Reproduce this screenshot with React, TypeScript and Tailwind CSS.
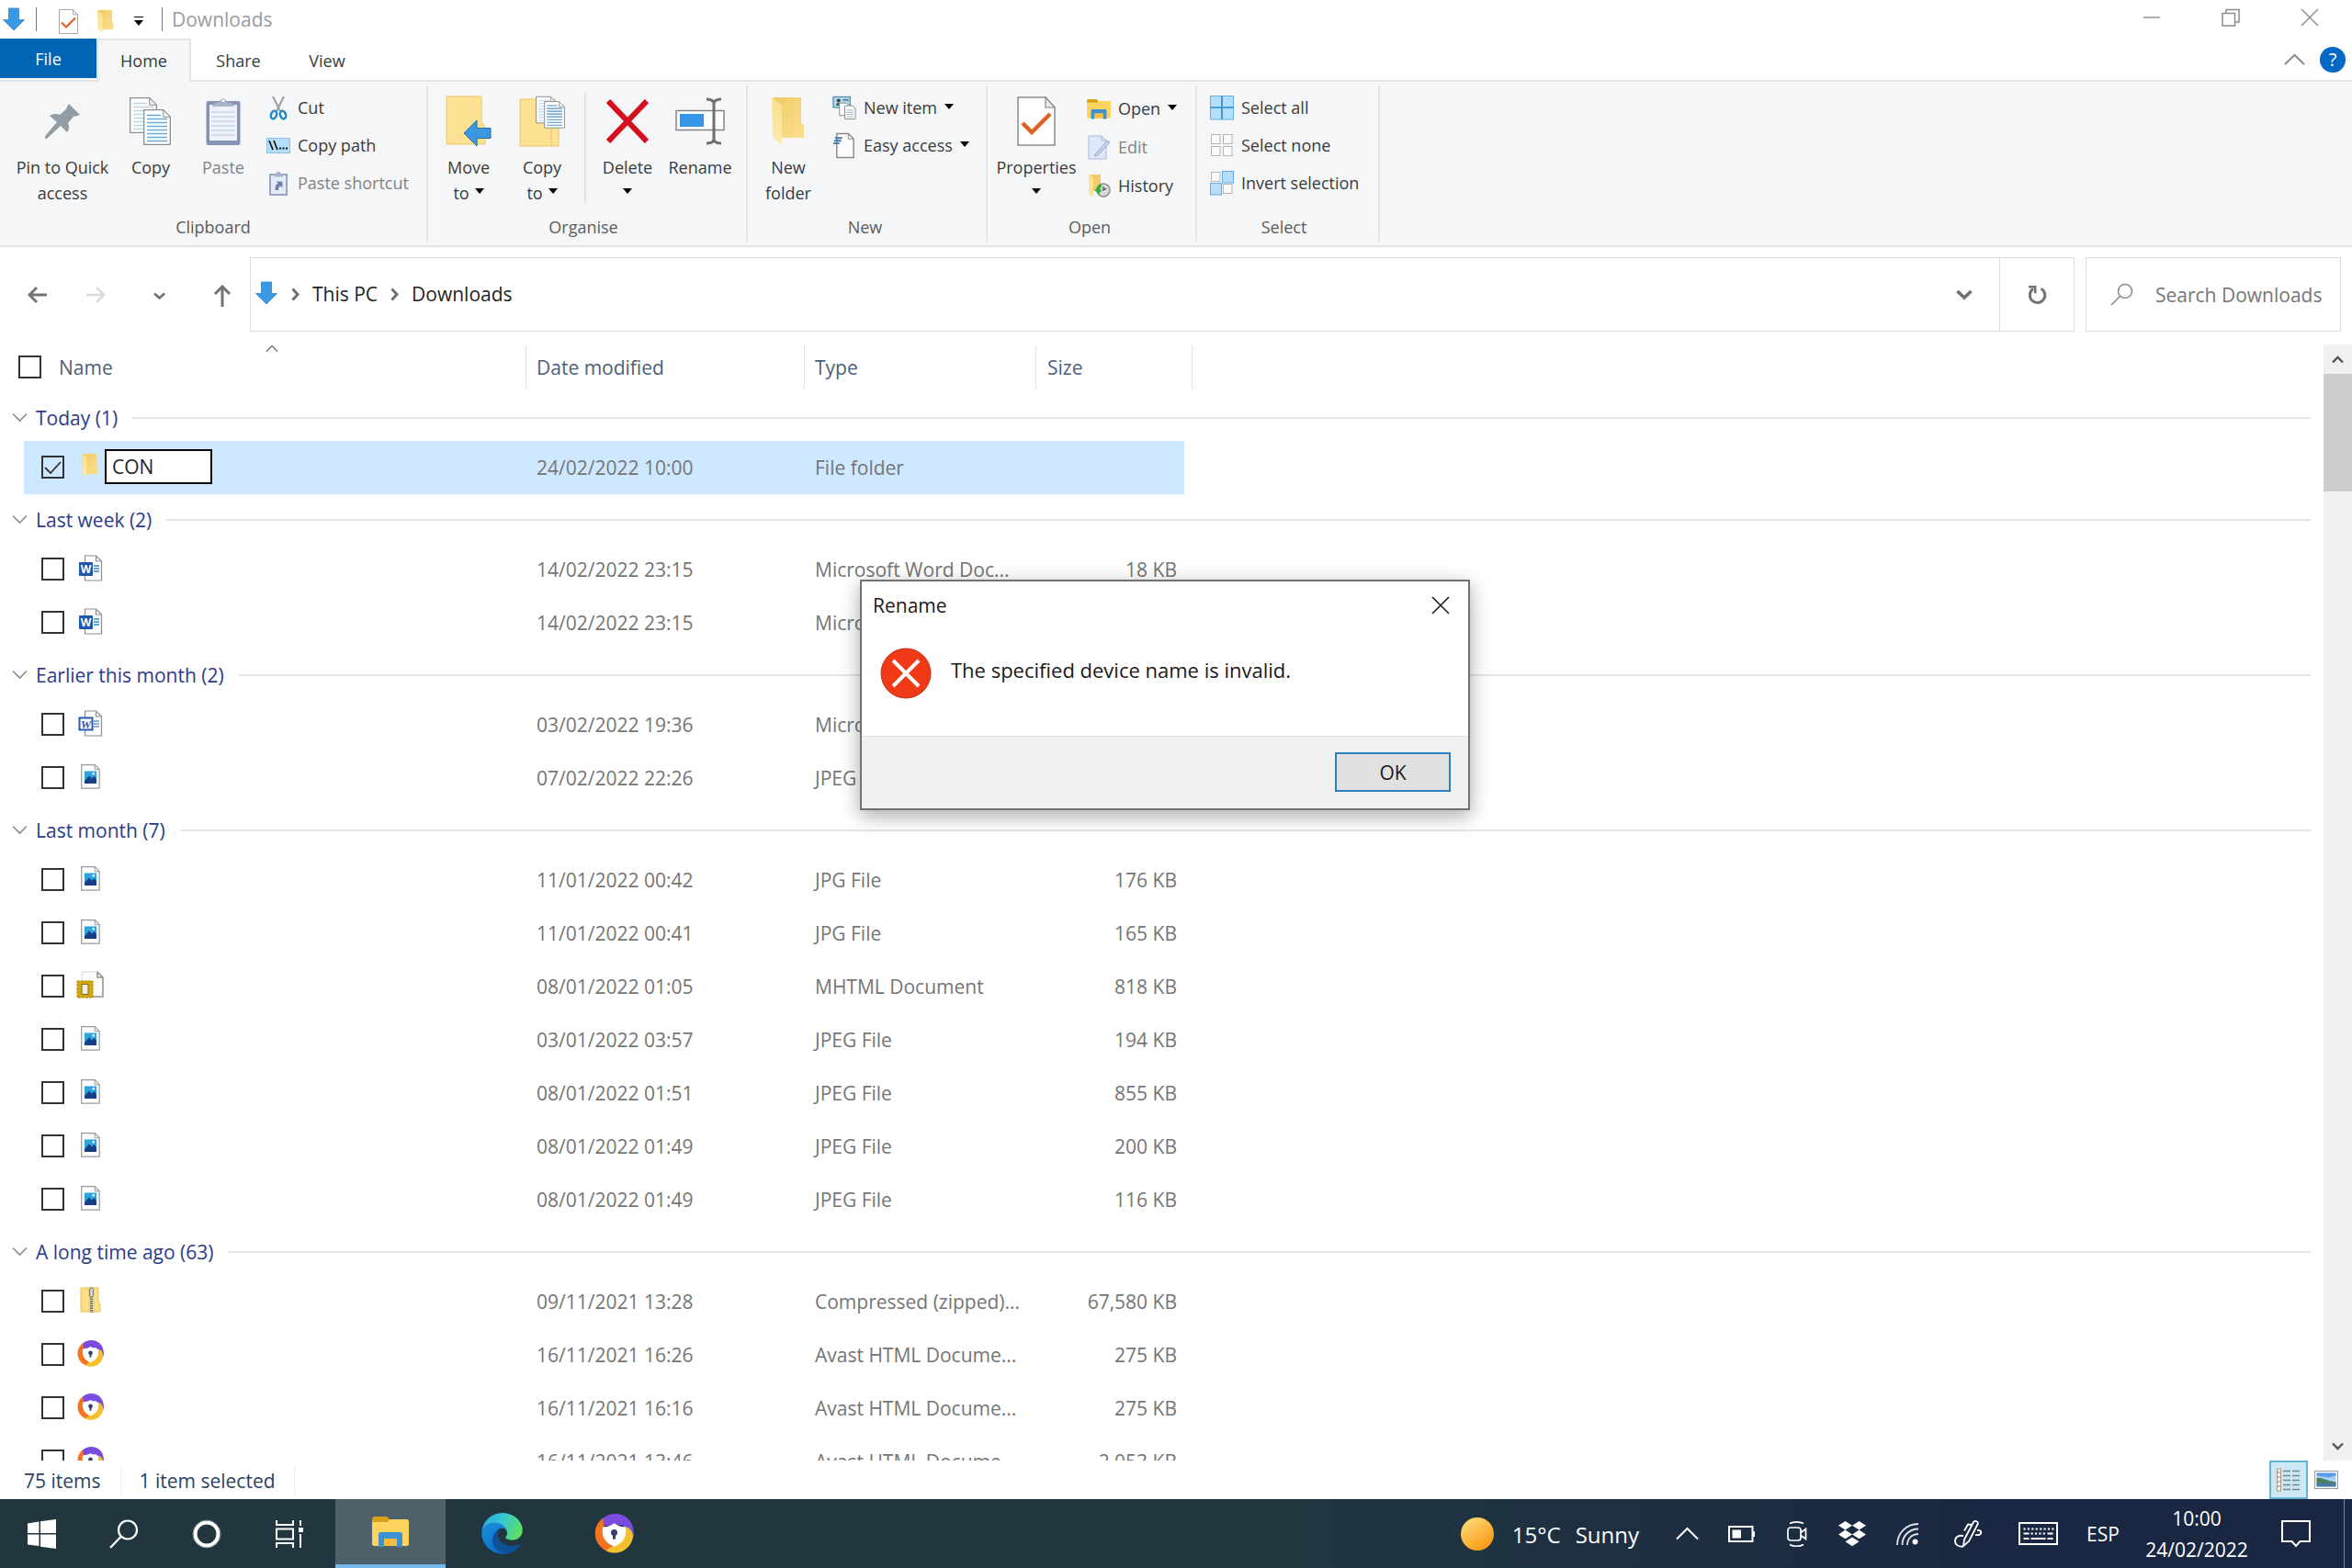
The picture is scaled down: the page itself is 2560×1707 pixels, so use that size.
import { Fragment, useState } from 'react'
import type { ReactNode } from 'react'

type FileKind = 'folder' | 'word' | 'wordOld' | 'image' | 'mhtml' | 'zip' | 'avast'

interface FileRow {
  kind: FileKind
  date: string
  type: string
  size: string
}

interface FileGroup {
  title: string
  rows: FileRow[]
}

const GROUPS: FileGroup[] = [
  {
    title: 'Today (1)',
    rows: [{ kind: 'folder', date: '24/02/2022 10:00', type: 'File folder', size: '' }],
  },
  {
    title: 'Last week (2)',
    rows: [
      { kind: 'word', date: '14/02/2022 23:15', type: 'Microsoft Word Doc...', size: '18 KB' },
      { kind: 'word', date: '14/02/2022 23:15', type: 'Microsoft Word Doc...', size: '18 KB' },
    ],
  },
  {
    title: 'Earlier this month (2)',
    rows: [
      { kind: 'wordOld', date: '03/02/2022 19:36', type: 'Microsoft Word 9...', size: '64 KB' },
      { kind: 'image', date: '07/02/2022 22:26', type: 'JPEG File', size: '152 KB' },
    ],
  },
  {
    title: 'Last month (7)',
    rows: [
      { kind: 'image', date: '11/01/2022 00:42', type: 'JPG File', size: '176 KB' },
      { kind: 'image', date: '11/01/2022 00:41', type: 'JPG File', size: '165 KB' },
      { kind: 'mhtml', date: '08/01/2022 01:05', type: 'MHTML Document', size: '818 KB' },
      { kind: 'image', date: '03/01/2022 03:57', type: 'JPEG File', size: '194 KB' },
      { kind: 'image', date: '08/01/2022 01:51', type: 'JPEG File', size: '855 KB' },
      { kind: 'image', date: '08/01/2022 01:49', type: 'JPEG File', size: '200 KB' },
      { kind: 'image', date: '08/01/2022 01:49', type: 'JPEG File', size: '116 KB' },
    ],
  },
  {
    title: 'A long time ago (63)',
    rows: [
      { kind: 'zip', date: '09/11/2021 13:28', type: 'Compressed (zipped)...', size: '67,580 KB' },
      { kind: 'avast', date: '16/11/2021 16:26', type: 'Avast HTML Docume...', size: '275 KB' },
      { kind: 'avast', date: '16/11/2021 16:16', type: 'Avast HTML Docume...', size: '275 KB' },
      { kind: 'avast', date: '16/11/2021 13:46', type: 'Avast HTML Docume...', size: '2,053 KB' },
    ],
  },
]

/* ---------- Icons ---------- */

function DownArrow() {
  return (
    <svg width="24" height="26" viewBox="0 0 24 26">
      <path d="M6.5 1h11v12.500h6L12 25 .5 13.500h6z" fill="#3a99e4" stroke="#2f86cd" strokeWidth=".8" />
    </svg>
  )
}

function Caret() {
  return (
    <svg width="10" height="6" viewBox="0 0 10 6" className="shrink-0">
      <path d="M0 0h10L5 6z" fill="#000" />
    </svg>
  )
}

function Chevron({ d, size, color, width }: { d: string; size: [number, number]; color: string; width: number }) {
  return (
    <svg width={size[0]} height={size[1]} viewBox={`0 0 ${size[0]} ${size[1]}`} className="shrink-0">
      <path d={d} fill="none" stroke={color} strokeWidth={width} />
    </svg>
  )
}

function FolderIcon({ width, height }: { width: number; height: number }) {
  return (
    <svg width={width} height={height} viewBox="0 0 36 52" preserveAspectRatio="none">
      <defs>
        <linearGradient id="folderBack" x1="0" y1="0" x2="1" y2="1">
          <stop offset="0" stopColor="#f0cc68" />
          <stop offset="1" stopColor="#fbdf8c" />
        </linearGradient>
        <linearGradient id="folderFront" x1="0" y1="0" x2="0" y2="1">
          <stop offset="0" stopColor="#fbe089" />
          <stop offset="1" stopColor="#fdeab0" />
        </linearGradient>
      </defs>
      <path d="M2 0h30v28l3 2v14H10z" fill="url(#folderBack)" />
      <path d="M0 0l11 9v43L1 43z" fill="url(#folderFront)" />
    </svg>
  )
}

function PropertiesIcon({ width, height }: { width: number; height: number }) {
  return (
    <svg width={width} height={height} viewBox="0 0 42 54">
      <path d="M1 1h30l10 11v41H1z" fill="#fdfdfd" stroke="#8b8b8b" strokeWidth="1.500" />
      <path d="M31 1v11h10z" fill="#ececec" stroke="#8b8b8b" strokeWidth="1.200" />
      <path d="M6 29l10 10 20-20" fill="none" stroke="#dd6424" strokeWidth="4.500" />
    </svg>
  )
}

function Sheet({ x, y, line }: { x: number; y: number; line: string }) {
  return (
    <g transform={`translate(${x} ${y})`}>
      <path d="M.7.7h21l7.600 7.600v30H.7z" fill="#fff" stroke="#8b8f94" strokeWidth="1.300" />
      <path d="M21.700.7v7.600h7.600z" fill="#eef0f2" stroke="#8b8f94" strokeWidth="1" />
      <path d="M4 6.500h15M4 10.500h22M4 14.500h22M4 18.500h22M4 22.500h22M4 26.500h22M4 30.500h22M4 34.500h22" stroke={line} strokeWidth="1.500" />
    </g>
  )
}

function CopyIcon() {
  return (
    <svg width="46" height="54" viewBox="0 0 46 54">
      <Sheet x={0} y={1} line="#b9d5e6" />
      <Sheet x={15} y={14} line="#67a9d4" />
    </svg>
  )
}

function PinIcon() {
  return (
    <svg width="40" height="40" viewBox="0 0 40 40">
      <path d="M27 1l12 12-3 1-4 1-6 7c2 4 1 7-1 10l-7-7L4 38c-1 1-3 2-3 0 0-1 0-2 1-3l12-14-8-7c3-2 7-3 11-1l7-6 1-3z" fill="#929ca5" />
    </svg>
  )
}

function PasteIcon() {
  return (
    <svg width="38" height="54" viewBox="0 0 38 54">
      <rect x=".5" y="5" width="37" height="48" rx="2" fill="#8693b3" />
      <rect x="4" y="9" width="30" height="39" fill="#eef2fb" />
      <path d="M6 17h26M6 22h26M6 27h26M6 32h26M6 37h26M6 42h26" stroke="#cdd5e8" strokeWidth="1.300" />
      <path d="M7 11c0-4 5-4 8-5 1-5 7-5 8 0 3 1 8 1 8 5z" fill="#aab3c9" />
      <circle cx="19" cy="4.500" r="1.600" fill="#f3f5f8" />
    </svg>
  )
}

function CutIcon() {
  return (
    <svg width="20" height="27" viewBox="0 0 20 27">
      <path d="M4 1l8 16M16 1L8 17" stroke="#9a9da1" strokeWidth="2" />
      <ellipse cx="5" cy="21" rx="3" ry="4.500" transform="rotate(20 5 21)" fill="none" stroke="#2389c6" strokeWidth="2.400" />
      <ellipse cx="15" cy="21" rx="3" ry="4.500" transform="rotate(-20 15 21)" fill="none" stroke="#2389c6" strokeWidth="2.400" />
    </svg>
  )
}

function CopyPathIcon() {
  return (
    <svg width="26" height="17" viewBox="0 0 26 17">
      <rect x=".5" y=".5" width="25" height="16" fill="#b5defb" stroke="#8fbfe4" />
      <path d="M3 3l4 10M8 3l4 10" stroke="#111" strokeWidth="1.700" />
      <path d="M14 11.500h2M17.500 11.500h2M21 11.500h2" stroke="#111" strokeWidth="2" />
    </svg>
  )
}

function PasteShortcutIcon() {
  return (
    <svg width="20" height="27" viewBox="0 0 20 27">
      <rect x="1" y="4" width="18" height="22" fill="#e6ecf7" stroke="#98a6c3" strokeWidth="2" />
      <path d="M5 5c0-2 2-2 3-2.500 0-2.500 4-2.500 4 0C13 3 15 3 15 5v1.500H5z" fill="#aab3c9" />
      <path d="M6.500 21c0-5 1-6.500 3-7.500l-2-2h7v7l-2-2c-2 1-2.500 2-2.500 4.500z" fill="#7484a8" />
    </svg>
  )
}

function MoveToIcon() {
  return (
    <svg width="50" height="56" viewBox="0 0 50 56">
      <path d="M1 1h38v28l4 5v19H1z" fill="#fde293" stroke="#ecc76a" strokeWidth="1" />
      <path d="M35 33v20" stroke="#ecc76a" />
      <path d="M20 41l14-14v8.500h15v11H34V55z" fill="#3a97e2" stroke="#2b6ea6" strokeWidth="1" />
    </svg>
  )
}

function CopyToIcon() {
  return (
    <svg width="50" height="56" viewBox="0 0 50 56">
      <path d="M1 4h38v28l4 3v20H1z" fill="#fde293" stroke="#ecc76a" strokeWidth="1" />
      <path d="M35 35v20" stroke="#ecc76a" />
      <g transform="translate(18 0) scale(.76)">
        <Sheet x={0} y={1} line="#b9d5e6" />
        <Sheet x={12} y={8} line="#4f92cc" />
      </g>
    </svg>
  )
}

function DeleteIcon() {
  return (
    <svg width="46" height="48" viewBox="0 0 46 48">
      <path d="M2 2l42 44M44 2L2 46" stroke="#d6101c" strokeWidth="6" />
    </svg>
  )
}

function RenameIcon() {
  return (
    <svg width="54" height="52" viewBox="0 0 54 52">
      <rect x="1" y="14.500" width="52" height="21" fill="#fdfdfd" stroke="#7d7d7d" strokeWidth="1.400" />
      <rect x="5" y="18" width="26" height="14" fill="#3595e6" />
      <path d="M42 6v40M34 2c5 0 8 1 8 5 0-4 3-5 8-5M34 50c5 0 8-1 8-5 0 4 3 5 8 5" fill="none" stroke="#6f6f6f" strokeWidth="3" />
    </svg>
  )
}

function NewItemIcon() {
  return (
    <svg width="27" height="27" viewBox="0 0 27 27">
      <rect x="1" y="1" width="19" height="12" fill="#a9daf4" stroke="#5d8aa6" strokeWidth="1.300" />
      <path d="M4 11c0-5 6-5 6 0z" fill="#3f6f4f" />
      <circle cx="7" cy="5" r="2" fill="#3d3a37" />
      <path d="M12 4.500h6" stroke="#456" strokeWidth="1.300" />
      <path d="M8 8h8l3 3v11H8z" fill="#fff" stroke="#888" />
      <path d="M14 11h9l3 3v12H14z" fill="#fff" stroke="#888" />
      <path d="M16 16h8M16 18.500h8M16 21h8M16 23.500h8" stroke="#9db1bf" />
    </svg>
  )
}

function EasyAccessIcon() {
  return (
    <svg width="27" height="29" viewBox="0 0 27 29">
      <path d="M5 1h13l6 6v21H5z" fill="#fbfbfb" stroke="#8a8a8a" strokeWidth="1.500" />
      <path d="M18 1v6h6" fill="none" stroke="#8a8a8a" />
      <path d="M3 6h8M2 9h8M1 12h7" stroke="#3c77b4" strokeWidth="2" />
    </svg>
  )
}

function ExplorerIcon({ width, height }: { width: number; height: number }) {
  return (
    <svg width={width} height={height} viewBox="0 0 40 34">
      <path d="M0 3c0-2 1-3 3-3h13l3 3v5H0z" fill="#dba114" />
      <path d="M0 6h17l2-3h19c1 0 2 1 2 2v25c0 1-1 2-2 2H2c-1 0-2-1-2-2z" fill="#fcd45e" />
      <path d="M7 33V19c0-1 1-2 2-2h22c1 0 2 1 2 2v14h-6v-9H13v9z" fill="#3d92d4" />
      <path d="M13 24h14v8H13z" fill="#f5be3d" />
    </svg>
  )
}

function EditIcon() {
  return (
    <svg width="25" height="27" viewBox="0 0 25 27">
      <path d="M1 1h14l5 5v20H1z" fill="#dde8fa" stroke="#a9bad8" />
      <path d="M15 1v5h5" fill="none" stroke="#a9bad8" />
      <path d="M8 21L21 6l3 2L11 22l-4 1z" fill="#c3cfe6" stroke="#a0afcc" />
    </svg>
  )
}

function HistoryIcon() {
  return (
    <svg width="25" height="27" viewBox="0 0 25 27">
      <path d="M2 1h12v18H6z" fill="#f3cd69" />
      <path d="M1 1l5 4v21l-5-4z" fill="#fce49a" />
      <circle cx="17" cy="18" r="7" fill="#d9d9d9" stroke="#8c8c8c" strokeWidth="1.500" />
      <path d="M17 14v4l3-2" fill="none" stroke="#444" strokeWidth="1.200" />
      <path d="M15 11.500c-4 .5-5.500 3-5.500 6H7l5 5 3.500-5h-2.500c0-1.500 1-3 2-3.500z" fill="#2fae3f" />
    </svg>
  )
}

const CELLS: [number, number][] = [
  [0, 0],
  [13, 0],
  [0, 13],
  [13, 13],
]

function GridIcon({ filled, join }: { filled: number[]; join?: boolean }) {
  return (
    <svg width="26" height="27" viewBox="0 0 26 27">
      {CELLS.map(([x, y], i) => {
        const on = filled.includes(i)
        return (
          <rect
            key={i}
            x={on ? x + 0.5 : x + 1.5}
            y={on ? y + 0.5 : y + 1.5}
            width={on ? 12 : 9.5}
            height={on ? 12.5 : 10}
            fill={on ? '#b4defa' : '#fbfbfb'}
            stroke={on ? '#67ade0' : '#b5b5b5'}
          />
        )
      })}
      {join && <path d="M13 0v26M0 13h26" stroke="#3f94d4" strokeWidth="1.600" />}
    </svg>
  )
}

function AvastIcon({ size }: { size: number }) {
  return (
    <svg width={size} height={size} viewBox="0 0 42 42">
      <path d="M10 4C-2 11-4 32 14 40c3 1 6 1 9 0L11 25z" fill="#f4731f" />
      <path d="M9 5C18-4 42-2 42 22c0 1-1 4-2 5L30 12 10 13z" fill="#7a4be0" />
      <path d="M41 23c0 12-14 24-29 16l8-5 12-20c5 0 8 4 9 9z" fill="#f5c02c" />
      <path d="M9 14c4 0 8-1 12-4 4 3 8 4 12 4 2 10-2 17-12 21C11 31 7 24 9 14z" fill="#fff" />
      <circle cx="21" cy="20" r="3.400" fill="#35406f" />
      <path d="M19.500 21h3v6h-3z" fill="#35406f" />
    </svg>
  )
}

function PageWithFold() {
  return (
    <>
      <path d="M5.500 1h12l6 6v21h-18z" fill="#fdfdfd" stroke="#8e8e8e" strokeWidth="1.200" />
      <path d="M17.500 1v6h6" fill="none" stroke="#8e8e8e" strokeWidth="1.200" />
    </>
  )
}

function FileIcon({ kind }: { kind: FileKind }) {
  switch (kind) {
    case 'folder':
      return <FolderIcon width={18} height={26} />
    case 'word':
      return (
        <svg width="27" height="29" viewBox="0 0 27 29">
          <g transform="translate(2 0)">
            <PageWithFold />
          </g>
          <path d="M17 12h6M17 15h6M17 18h6" stroke="#5ea7d8" strokeWidth="1.800" />
          <rect x="1" y="8" width="15" height="15" rx="1" fill="#1f56b0" />
          <text x="8.500" y="20" textAnchor="middle" fontSize="12" fontWeight="700" fill="#fff" fontFamily="Open Sans, sans-serif">
            W
          </text>
        </svg>
      )
    case 'wordOld':
      return (
        <svg width="27" height="29" viewBox="0 0 27 29">
          <g transform="translate(2 0)">
            <PageWithFold />
          </g>
          <path d="M17 12h6M17 15h6M17 18h6" stroke="#2a5db0" strokeWidth="1.200" />
          <rect x="1.500" y="8.500" width="14" height="13" fill="#fff" stroke="#2a5db0" strokeWidth="2" />
          <text x="8.500" y="19.500" textAnchor="middle" fontSize="13" fontWeight="700" fontStyle="italic" fill="#2a5db0" fontFamily="Liberation Serif, serif">
            W
          </text>
        </svg>
      )
    case 'image':
      return (
        <svg width="21" height="27" viewBox="0 0 21 27">
          <path d="M.7.7h14.500l5 5v20.500H.7z" fill="#fdfdfd" stroke="#9a9a9a" strokeWidth="1.200" />
          <path d="M15.200.7v5h5" fill="none" stroke="#9a9a9a" />
          <rect x="4" y="7.500" width="13" height="13.500" fill="#2aa3e0" />
          <path d="M4 18l5-5.500 3 3 2.500-2.500 2.500 3v5H4z" fill="#173f86" />
          <rect x="12.500" y="9" width="2.500" height="2.500" fill="#e8f5fd" />
        </svg>
      )
    case 'mhtml':
      return (
        <svg width="30" height="30" viewBox="0 0 30 30">
          <path d="M6 1h17l6 6v22H6z" fill="#fcfcfc" />
          <path d="M23 1l6 6v21H18M23 1v6h6" fill="none" stroke="#8e8e8e" strokeWidth="1.500" />
          <path d="M6 10V1h17" fill="none" stroke="#d8d8d8" />
          <rect x="1" y="11" width="17" height="18" fill="#d1a912" stroke="#a8870a" strokeDasharray="3 1" />
          <rect x="6" y="14.500" width="7" height="11" fill="#f0eee4" stroke="#7f6a15" />
        </svg>
      )
    case 'zip':
      return (
        <svg width="23" height="28" viewBox="0 0 23 28">
          <path d="M1 1h19v15l2 2v9H1z" fill="#fadf83" stroke="#e5c45c" />
          <rect x="9" y="0" width="7" height="28" fill="#e9d68c" />
          <path d="M12.500 10v18" stroke="#77735f" strokeWidth="3" strokeDasharray="1.500 1" />
          <rect x="10.500" y="1" width="4" height="10" rx="2" fill="#d4d4d4" stroke="#777" />
        </svg>
      )
    case 'avast':
      return <AvastIcon size={29} />
  }
}

function EdgeIcon() {
  return (
    <svg width="45" height="45" viewBox="0 0 256 259">
      <defs>
        <linearGradient id="edgeTop" x1="0" y1=".3" x2="1" y2=".6">
          <stop offset="0" stopColor="#2aa8e0" />
          <stop offset=".45" stopColor="#35c7d2" />
          <stop offset="1" stopColor="#5ee05a" />
        </linearGradient>
        <linearGradient id="edgeMid" x1="0" y1="0" x2=".6" y2="1">
          <stop offset="0" stopColor="#1a90d8" />
          <stop offset="1" stopColor="#0b6fd0" />
        </linearGradient>
      </defs>
      <path d="M235.700 195.500a94 94 0 0 1-10.600 4.700 102 102 0 0 1-35.900 6.400c-47.300 0-88.500-32.500-88.500-74.300A31.500 31.500 0 0 1 117.100 105c-42.800 1.800-53.800 46.400-53.800 72.500 0 73.900 68 81.400 82.800 81.400 7.900 0 19.800-2.300 27-4.600l1.300-.4a128 128 0 0 0 66.600-52.800 4 4 0 0 0-5.300-5.600Z" fill="#0f4f98" />
      <path d="M105.700 241.400A79 79 0 0 1 83 220a80.700 80.700 0 0 1 29.500-120.300c3.200-1.500 8.500-4.100 15.500-4a32.400 32.400 0 0 1 25.700 13 32 32 0 0 1 6.300 18.700c0-.2 24.500-79.600-80-79.600C36.100 47.800 0 89.500 0 126a130 130 0 0 0 12.100 56 128 128 0 0 0 156.400 67.100 75.600 75.600 0 0 1-62.800-7.700Z" fill="url(#edgeMid)" />
      <path d="M152.300 148.900c-.8 1-3.300 2.500-3.300 5.600 0 2.600 1.700 5.100 4.700 7.200 14.400 10 41.500 8.700 41.600 8.700a59.600 59.600 0 0 0 30.300-8.300 61.400 61.400 0 0 0 30.400-52.900c.3-22.400-8-37.300-11.300-43.900C223.500 23.900 177.700 0 128 0A128 128 0 0 0 0 126.200c.5-36.500 36.800-66 80-66 3.500 0 23.500.3 42 10 16.300 8.600 24.900 19 30.800 29.200 6.200 10.700 7.300 24.200 7.300 29.500s-2.700 13.400-7.800 20Z" fill="url(#edgeTop)" />
    </svg>
  )
}

/* ---------- Ribbon ---------- */

function BigButton({
  icon,
  lines,
  className,
  caret,
  disabled,
}: {
  icon: ReactNode
  lines: string[]
  className: string
  caret?: 'inline' | 'below'
  disabled?: boolean
}) {
  return (
    <button type="button" disabled={disabled} className={`flex flex-col items-center text-[#3b3b3b] disabled:text-[#838383] ${className}`}>
      <span className="flex h-[71px] items-center justify-center pb-[2px]">{icon}</span>
      {lines.map((line, i) => (
        <span key={line} className="flex items-center gap-[6px] whitespace-nowrap leading-7">
          {line}
          {caret === 'inline' && i === lines.length - 1 && (
            <span className="pb-1">
              <Caret />
            </span>
          )}
        </span>
      ))}
      {caret === 'below' && (
        <span className="flex h-6 items-center">
          <Caret />
        </span>
      )}
    </button>
  )
}

function SmallButton({ icon, label, caret, disabled }: { icon: ReactNode; label: string; caret?: boolean; disabled?: boolean }) {
  return (
    <button type="button" disabled={disabled} className="flex h-[41px] items-center gap-2 whitespace-nowrap text-[#3b3b3b] disabled:text-[#838383]">
      <span className="flex w-[26px] justify-center">{icon}</span>
      {label}
      {caret && (
        <span className="pb-1">
          <Caret />
        </span>
      )}
    </button>
  )
}

function RibbonGroup({ label, className, children }: { label: string; className: string; children: ReactNode }) {
  return (
    <section className={`my-1 flex flex-col border-r-2 border-[#e3e5e7] pb-[2px] pt-[4px] ${className}`}>
      <div className="flex flex-1 items-start">{children}</div>
      <h2 className="text-center leading-7 text-[#5c5c5c]">{label}</h2>
    </section>
  )
}

function Ribbon() {
  return (
    <div className="flex h-[182px] border-y-2 border-[#e2e4e6] bg-[#f4f6f8] text-[18px]">
      <RibbonGroup label="Clipboard" className="w-[466px]">
        <BigButton icon={<PinIcon />} lines={['Pin to Quick', 'access']} className="ml-3 w-[112px]" />
        <BigButton icon={<CopyIcon />} lines={['Copy']} className="w-[80px]" />
        <BigButton icon={<PasteIcon />} lines={['Paste']} className="w-[78px]" disabled />
        <div className="flex flex-col pl-2">
          <SmallButton icon={<CutIcon />} label="Cut" />
          <SmallButton icon={<CopyPathIcon />} label="Copy path" />
          <SmallButton icon={<PasteShortcutIcon />} label="Paste shortcut" disabled />
        </div>
      </RibbonGroup>
      <RibbonGroup label="Organise" className="w-[348px] pr-2">
        <BigButton icon={<MoveToIcon />} lines={['Move', 'to']} className="ml-1 w-[80px]" caret="inline" />
        <BigButton icon={<CopyToIcon />} lines={['Copy', 'to']} className="w-[80px]" caret="inline" />
        <div className="mx-[6px] mt-1 h-[120px] w-[2px] bg-[#e0e2e4]" />
        <BigButton icon={<DeleteIcon />} lines={['Delete']} className="w-[78px]" caret="below" />
        <BigButton icon={<RenameIcon />} lines={['Rename']} className="w-[80px]" />
      </RibbonGroup>
      <RibbonGroup label="New" className="w-[261px] pr-1">
        <BigButton icon={<FolderIcon width={36} height={52} />} lines={['New', 'folder']} className="w-[88px]" />
        <div className="flex flex-col pl-1">
          <SmallButton icon={<NewItemIcon />} label="New item" caret />
          <SmallButton icon={<EasyAccessIcon />} label="Easy access" caret />
        </div>
      </RibbonGroup>
      <RibbonGroup label="Open" className="w-[228px] pr-1">
        <BigButton icon={<PropertiesIcon width={42} height={54} />} lines={['Properties']} className="w-[106px]" caret="below" />
        <div className="flex flex-col gap-[1px] pl-[2px] pt-[1px]">
          <SmallButton icon={<ExplorerIcon width={27} height={24} />} label="Open" caret />
          <SmallButton icon={<EditIcon />} label="Edit" disabled />
          <SmallButton icon={<HistoryIcon />} label="History" />
        </div>
      </RibbonGroup>
      <RibbonGroup label="Select" className="w-[199px] pr-2">
        <div className="ml-[14px] flex flex-col">
          <SmallButton icon={<GridIcon filled={[0, 1, 2, 3]} join />} label="Select all" />
          <SmallButton icon={<GridIcon filled={[]} />} label="Select none" />
          <SmallButton icon={<GridIcon filled={[1, 2]} />} label="Invert selection" />
        </div>
      </RibbonGroup>
    </div>
  )
}

/* ---------- Window chrome ---------- */

function TitleBar() {
  return (
    <header className="flex h-[42px] items-center pl-[3px] pr-[3px]">
      <DownArrow />
      <div className="ml-3 h-[26px] w-[1px] bg-[#777]" />
      <button type="button" aria-label="Properties" className="ml-6 pt-1">
        <PropertiesIcon width={21} height={27} />
      </button>
      <button type="button" aria-label="New folder" className="ml-[21px] pt-1">
        <FolderIcon width={18} height={25} />
      </button>
      <button type="button" aria-label="Customise toolbar" className="ml-[22px] flex flex-col items-center gap-[3px] pt-1">
        <span className="h-[1px] w-[10px] bg-black" />
        <Caret />
      </button>
      <div className="ml-5 h-[26px] w-[1px] bg-[#777]" />
      <h1 className="ml-[10px] flex-1 pt-[2px] text-[21px] text-[#9b9b9b]">Downloads</h1>
      <button type="button" aria-label="Minimise" className="flex w-[86px] justify-center pb-1">
        <svg width="20" height="20" viewBox="0 0 20 20">
          <path d="M1 10h18" stroke="#999" strokeWidth="1.600" />
        </svg>
      </button>
      <button type="button" aria-label="Restore" className="flex w-[86px] justify-center pb-1">
        <svg width="20" height="20" viewBox="0 0 20 20" fill="none" stroke="#8c8c8c" strokeWidth="1.500">
          <path d="M1 5.500h13.500v13.500H1zM5 5.500V1.500h14v13.500h-4.500" />
        </svg>
      </button>
      <button type="button" aria-label="Close window" className="flex w-[86px] justify-center pb-1">
        <svg width="20" height="20" viewBox="0 0 20 20">
          <path d="M1 1l18 18M19 1L1 19" stroke="#8c8c8c" strokeWidth="1.500" />
        </svg>
      </button>
    </header>
  )
}

function TabBar() {
  return (
    <nav className="flex h-[45px] items-stretch text-[18px] text-[#3b3b3b]">
      <button type="button" className="mb-[2px] w-[105px] bg-[#0164b4] pt-[2px] text-white">
        File
      </button>
      <button type="button" className="relative z-10 -mb-[2px] w-[103px] border-x-2 border-t-2 border-[#e2e4e6] bg-[#f4f6f8]">
        Home
      </button>
      <button type="button" className="w-[103px] pt-[3px]">
        Share
      </button>
      <button type="button" className="w-[90px] pt-[3px]">
        View
      </button>
      <div className="ml-auto flex items-center gap-4 pr-[7px]">
        <button type="button" aria-label="Collapse ribbon">
          <Chevron d="M1 12L11.500 2 22 12" size={[23, 14]} color="#8c8c8c" width={2} />
        </button>
        <button type="button" className="flex size-7 items-center justify-center rounded-full bg-[#0568c6] text-[20px] leading-7 text-white">
          ?
        </button>
      </div>
    </nav>
  )
}

function NavBar() {
  const crumb = <Chevron d="M1.500 1.500L7 7.500 1.500 13.500" size={[9, 15]} color="#707070" width={3} />
  return (
    <div className="flex h-[106px] items-start pr-3 pt-[11px] text-[21px]">
      <button type="button" aria-label="Back" className="flex h-[81px] w-[82px] items-center justify-center">
        <svg width="22" height="20" viewBox="0 0 22 20" fill="none" stroke="#737373" strokeWidth="3">
          <path d="M21 10H2M10 2l-8 8 8 8" />
        </svg>
      </button>
      <button type="button" aria-label="Forward" disabled className="flex h-[81px] w-[44px] items-center justify-center">
        <svg width="22" height="20" viewBox="0 0 22 20" fill="none" stroke="#dadada" strokeWidth="2.600">
          <path d="M1 10h19M12 2l8 8-8 8" />
        </svg>
      </button>
      <button type="button" aria-label="Recent locations" className="flex h-[81px] w-[94px] items-center justify-center pt-[3px]">
        <Chevron d="M1 1.500l5.500 5 5.500-5" size={[13, 9]} color="#707070" width={2.6} />
      </button>
      <button type="button" aria-label="Up" className="flex h-[81px] w-[44px] items-center justify-center pt-[3px]">
        <svg width="20" height="24" viewBox="0 0 20 24" fill="none" stroke="#737373" strokeWidth="3">
          <path d="M10 24V2M2 10l8-8 8 8" />
        </svg>
      </button>
      <div className="ml-2 flex h-[81px] flex-1 items-stretch border border-[#dcdcdc]">
        <div className="flex flex-1 items-center pl-[5px] pr-[29px] text-[#1f1f1f]">
          <span className="pb-1">
            <DownArrow />
          </span>
          <span className="ml-[15px]">{crumb}</span>
          <a href="#this-pc" className="ml-[14px]">
            This PC
          </a>
          <span className="ml-[14px]">{crumb}</span>
          <a href="#downloads" className="ml-[14px]">
            Downloads
          </a>
          <button type="button" aria-label="Previous locations" className="ml-auto">
            <Chevron d="M1.500 2l7.500 7 7.500-7" size={[18, 12]} color="#707070" width={3.6} />
          </button>
        </div>
        <button type="button" aria-label="Refresh" className="flex w-[81px] items-center justify-center border-l border-[#dcdcdc]">
          <svg width="22" height="22" viewBox="0 0 22 22" fill="none" stroke="#737373">
            <path d="M15.500 4.200a8.200 8.200 0 1 1-8.500.4" strokeWidth="3" />
            <path d="M2 2.200h7.200v7" strokeWidth="2.600" />
          </svg>
        </button>
      </div>
      <label className="ml-3 flex h-[81px] w-[278px] items-center border border-[#dcdcdc] pl-[26px]">
        <svg width="25" height="25" viewBox="0 0 25 25" fill="none" stroke="#8c8c8c" strokeWidth="1.600" className="shrink-0">
          <circle cx="16" cy="9" r="7.500" />
          <path d="M10.500 14.500L1 24" />
        </svg>
        <input
          type="search"
          aria-label="Search Downloads"
          placeholder="Search Downloads"
          className="ml-6 min-w-0 flex-1 bg-transparent pt-[3px] outline-none placeholder:text-[#757575]"
        />
      </label>
    </div>
  )
}

/* ---------- File list ---------- */

function Tick({ label, defaultChecked }: { label: string; defaultChecked?: boolean }) {
  return (
    <span className="relative flex size-[25px] shrink-0">
      <input
        type="checkbox"
        aria-label={label}
        defaultChecked={defaultChecked}
        className="peer size-[25px] appearance-none border-2 border-[#333]"
      />
      <svg viewBox="0 0 25 25" className="pointer-events-none absolute inset-0 hidden peer-checked:block">
        <path d="M4 13l6 6L21 7" fill="none" stroke="#333" strokeWidth="1.800" />
      </svg>
    </span>
  )
}

function FileRowView({ row }: { row: FileRow }) {
  const selected = row.kind === 'folder'
  const bg = selected ? 'bg-[#cde8ff]' : ''
  const [name, setName] = useState('CON')
  return (
    <tr className="h-[58px] text-[#757575]">
      <td className="p-0" />
      <td className={`p-0 pb-[2px] pl-[19px] ${bg}`}>
        <div className="flex items-center">
          <Tick label={`Select ${row.type}`} defaultChecked={selected} />
          <span className="ml-3 flex w-8 justify-center pb-[2px]">
            <FileIcon kind={row.kind} />
          </span>
          {selected && (
            <input
              aria-label="Folder name"
              value={name}
              onChange={(e) => setName(e.target.value)}
              className="h-[38px] w-[117px] border-2 border-black bg-white pl-[6px] text-[#222] outline-none"
            />
          )}
        </div>
      </td>
      <td className={`p-0 pl-3 ${bg}`}>{row.date}</td>
      <td className={`whitespace-nowrap p-0 pl-3 ${bg}`}>{row.type}</td>
      <td className={`p-0 pr-2 text-right ${bg}`}>{row.size}</td>
      <td className="p-0" />
    </tr>
  )
}

function FileTable() {
  return (
    <table className="w-full table-fixed border-collapse text-left text-[21px] leading-7">
      <colgroup>
        <col className="w-[26px]" />
        <col className="w-[546px]" />
        <col className="w-[303px]" />
        <col className="w-[252px]" />
        <col className="w-[162px]" />
        <col />
      </colgroup>
      <thead>
        <tr className="h-[52px] text-[#4c607a]">
          <th colSpan={2} className="relative p-0 pl-5 align-top font-normal">
            <div className="flex h-12 items-center gap-[19px]">
              <Tick label="Select all items" />
              <span className="pt-[2px]">Name</span>
            </div>
            <span className="absolute left-[289px] top-0">
              <Chevron d="M1 7.500l6-6 6 6" size={[14, 9]} color="#777" width={1.4} />
            </span>
          </th>
          <th className="p-0 align-top font-normal">
            <div className="flex h-12 items-center border-l border-[#e5e5e5] pl-[11px] pt-[2px]">Date modified</div>
          </th>
          <th className="p-0 align-top font-normal">
            <div className="flex h-12 items-center border-l border-[#e5e5e5] pl-[11px] pt-[2px]">Type</div>
          </th>
          <th className="p-0 align-top font-normal">
            <div className="flex h-12 items-center border-l border-[#e5e5e5] pl-3 pt-[2px]">Size</div>
          </th>
          <td className="p-0 pl-2 align-top">
            <div className="h-12 border-l border-[#e5e5e5]" />
          </td>
        </tr>
      </thead>
      <tbody>
        {GROUPS.map((group) => (
          <Fragment key={group.title}>
            <tr className="h-[53px]">
              <th colSpan={6} className="p-0 pt-[2px] font-normal">
                <div className="flex items-center pl-[13px] pr-[14px]">
                  <button type="button" className="flex items-center gap-[9px] text-[#2c3b8b]">
                    <Chevron d="M1 1.500L8.500 9 16 1.500" size={[17, 11]} color="#8a8a8a" width={1.6} />
                    {group.title}
                  </button>
                  <div className="ml-4 h-[2px] flex-1 bg-[#e4e4e4]" />
                </div>
              </th>
            </tr>
            {group.rows.map((row, i) => (
              <FileRowView key={i} row={row} />
            ))}
          </Fragment>
        ))}
      </tbody>
    </table>
  )
}

function ScrollBar() {
  return (
    <div className="flex w-[31px] shrink-0 flex-col bg-[#f0f0f0]">
      <button type="button" aria-label="Scroll up" className="flex h-8 items-center justify-center">
        <Chevron d="M1 7.500l5.500-5.500L12 7.500" size={[13, 9]} color="#555" width={2.4} />
      </button>
      <div className="h-32 bg-[#cdcdcd]" />
      <button type="button" aria-label="Scroll down" className="mt-auto flex h-8 items-center justify-center">
        <Chevron d="M1 1.500L6.500 7 12 1.500" size={[13, 9]} color="#555" width={2.4} />
      </button>
    </div>
  )
}

function StatusBar() {
  return (
    <footer className="flex h-[42px] items-center text-[21px] text-[#2b4361]">
      <span className="pl-[26px] pt-[3px]">75 items</span>
      <div className="ml-[21px] h-8 w-[1px] bg-[#eee]" />
      <span className="ml-5 pt-[3px]">1 item selected</span>
      <div className="ml-5 h-8 w-[1px] bg-[#eee]" />
      <button type="button" aria-label="Details view" className="ml-auto flex h-full w-[42px] items-center justify-center border-2 border-[#63b5d2] bg-[#cce8f4]">
        <svg width="26" height="26" viewBox="0 0 26 26">
          <rect x=".5" y="1" width="4" height="24" fill="#fdf5ec" stroke="#a99a8c" />
          <path d="M1 5h3M1 10h3M1 15h3M1 20h3" stroke="#8b7a72" />
          <path d="M7 3.500h8M17 3.500h8M7 8.500h8M17 8.500h8M7 13.500h8M17 13.500h8M7 18.500h8M17 18.500h8M7 23.500h8M17 23.500h8" stroke="#76868e" strokeWidth="1.300" />
        </svg>
      </button>
      <button type="button" aria-label="Thumbnail view" className="ml-[7px] mr-[15px]">
        <svg width="26" height="20" viewBox="0 0 26 20">
          <rect x=".5" y=".5" width="25" height="19" fill="#fff" stroke="#9a9a9a" />
          <rect x="2.500" y="2.500" width="21" height="15" fill="#a9d3f7" />
          <path d="M2.500 2.500h21v3l-8 2-13-2z" fill="#5f9be9" />
          <path d="M2.500 8c5-1 10 3 21 4.500v1.500h-21z" fill="#4c7f5a" />
          <path d="M2.500 13.500h21v4h-21z" fill="#4a7ba3" />
        </svg>
      </button>
    </footer>
  )
}

/* ---------- Dialog ---------- */

function RenameDialog() {
  const [open, setOpen] = useState(true)
  if (!open) return null
  return (
    <div
      role="dialog"
      aria-labelledby="rename-title"
      className="absolute left-[936px] top-[631px] z-20 w-[664px] border-2 border-[#707070] bg-white text-[21px] text-[#1a1a1a] shadow-[0_6px_20px_rgba(0,0,0,0.35)]"
    >
      <div className="flex h-[54px] items-center justify-between pl-3 pr-[20px]">
        <h2 id="rename-title">Rename</h2>
        <button type="button" aria-label="Close dialog" className="pb-[3px]" onClick={() => setOpen(false)}>
          <svg width="20" height="20" viewBox="0 0 20 20">
            <path d="M1 1l18 18M19 1L1 19" stroke="#222" strokeWidth="1.700" />
          </svg>
        </button>
      </div>
      <div className="flex h-[114px] items-start pl-5 pt-[18px]">
        <svg width="56" height="56" viewBox="0 0 56 56">
          <circle cx="28" cy="28" r="27" fill="#f03a17" stroke="#c22f12" />
          <path d="M14 14l28 28M42 14L14 42" stroke="#fff" strokeWidth="4" />
        </svg>
        <p className="ml-[21px] mt-[10px] text-[22px] leading-7">The specified device name is invalid.</p>
      </div>
      <div className="flex h-[79px] justify-end border-t border-[#dfdfdf] bg-[#f0f0f0] pr-[19px] pt-[17px]">
        <button
          type="button"
          onClick={() => setOpen(false)}
          className="h-[43px] w-[126px] border-2 border-[#2b80c0] bg-[#e1e1e1] pt-[2px]"
        >
          OK
        </button>
      </div>
    </div>
  )
}

/* ---------- Taskbar ---------- */

function TrayItem({ label, className, children }: { label: string; className: string; children: ReactNode }) {
  return (
    <button type="button" aria-label={label} className={`flex items-center justify-center ${className}`}>
      {children}
    </button>
  )
}

function Taskbar() {
  return (
    <div className="flex h-[75px] items-stretch bg-linear-to-r from-[#21363f] from-55% to-[#1a2742] to-85% text-[21px] text-white">
      <TrayItem label="Start" className="w-[90px]">
        <svg width="31" height="32" viewBox="0 0 31 32" fill="#fff">
          <path d="M0 4.500l12.500-2V15H0zM14 2.200L31 0v15H14zM0 16.500h12.500V29L0 27.500zM14 16.500h17V32l-17-2.300z" />
        </svg>
      </TrayItem>
      <TrayItem label="Search" className="w-[90px]">
        <svg width="32" height="32" viewBox="0 0 32 32" fill="none" stroke="#fff" strokeWidth="2.200">
          <circle cx="20" cy="11.500" r="10" />
          <path d="M13 18.500L1 31" />
        </svg>
      </TrayItem>
      <TrayItem label="Cortana" className="w-[90px]">
        <svg width="32" height="32" viewBox="0 0 32 32" fill="none">
          <circle cx="16" cy="16" r="12.500" stroke="#fff" strokeWidth="4" />
          <circle cx="16" cy="16" r="15" stroke="#8e9a9e" strokeWidth="1" />
        </svg>
      </TrayItem>
      <TrayItem label="Task view" className="w-[90px]">
        <svg width="32" height="32" viewBox="0 0 32 32" fill="none" stroke="#fff" strokeWidth="2">
          <path d="M2 1v5h18V1M2 31v-5h18v5M2 10.500h18v11H2zM28 1v6M28 16v15" />
          <rect x="26" y="9" width="5" height="5" fill="#fff" stroke="none" />
        </svg>
      </TrayItem>
      <button type="button" aria-label="File Explorer" className="ml-[5px] flex w-[120px] items-center justify-center border-b-4 border-[#76b9ed] bg-[#4e6068]">
        <ExplorerIcon width={40} height={34} />
      </button>
      <TrayItem label="Microsoft Edge" className="w-[122px]">
        <EdgeIcon />
      </TrayItem>
      <TrayItem label="Avast Secure Browser" className="w-[122px]">
        <AvastIcon size={43} />
      </TrayItem>

      <button type="button" className="ml-auto flex items-center pr-[22px] text-[24px]">
        <svg width="36" height="36" viewBox="0 0 36 36" className="mr-5">
          <defs>
            <linearGradient id="sun" x1=".1" y1="0" x2=".8" y2="1">
              <stop offset="0" stopColor="#ffe07a" />
              <stop offset="1" stopColor="#f9930f" />
            </linearGradient>
          </defs>
          <circle cx="18" cy="18" r="18" fill="url(#sun)" />
        </svg>
        <span className="mr-4 pt-[2px]">15°C</span>
        <span className="pt-[2px]">Sunny</span>
      </button>
      <TrayItem label="Show hidden icons" className="w-[60px]">
        <Chevron d="M1 13.500L12.500 2 24 13.500" size={[25, 15]} color="#fff" width={2} />
      </TrayItem>
      <TrayItem label="Battery" className="w-[60px]">
        <svg width="30" height="18" viewBox="0 0 30 18">
          <rect x="1" y="1" width="25.500" height="16" fill="none" stroke="#fff" strokeWidth="2" />
          <rect x="4.500" y="4.500" width="9.500" height="9" fill="#fff" />
          <path d="M28 6v6" stroke="#fff" strokeWidth="2" />
        </svg>
      </TrayItem>
      <TrayItem label="Meet now" className="w-[60px]">
        <svg width="22" height="30" viewBox="0 0 22 30" fill="none" stroke="#fff" strokeWidth="1.700">
          <rect x="1" y="8" width="14" height="14" rx="3" />
          <path d="M15 13.500l5.500-4v11l-5.500-4M3 3.500c4-2.300 11-2.300 15 0M3 26.500c4 2.300 11 2.300 15 0" />
        </svg>
      </TrayItem>
      <TrayItem label="Dropbox" className="w-[60px]">
        <svg width="30" height="28" viewBox="0 0 30 28" fill="#fff">
          <path d="M7.500 0L15 4.800 7.500 9.600 0 4.800zM22.500 0L30 4.800l-7.500 4.800L15 4.800zM7.500 9.600L15 14.400l-7.500 4.800L0 14.400zM22.500 9.600l7.500 4.800-7.500 4.800-7.500-4.800zM15 17.500l7.500 4.800L15 27.200l-7.500-4.900z" />
        </svg>
      </TrayItem>
      <TrayItem label="Network" className="w-[60px]">
        <svg width="24" height="24" viewBox="0 0 24 24" fill="none" stroke="#dfe4e8" strokeWidth="1.800">
          <path d="M1 24C1 11 11 1 24 1M6.500 24C6.500 14 14 6.500 24 6.500M12 24c0-7 5-12 12-12" />
          <circle cx="20.500" cy="20.500" r="3" fill="#fff" stroke="none" />
        </svg>
      </TrayItem>
      <TrayItem label="Windows Ink" className="w-[72px]">
        <svg width="31" height="31" viewBox="0 0 31 31" fill="none" stroke="#fff" strokeWidth="1.800">
          <path d="M11 22l10-19c1-2 5-1 5 1.500L16 24l-6 5zM19 6l-4-.5-4 7M10 18c-5-1-9 1-9 5.500S5 30 9 29.500M25 12c6-1 6 6-2 5" />
        </svg>
      </TrayItem>
      <TrayItem label="Touch keyboard" className="w-[80px]">
        <svg width="43" height="25" viewBox="0 0 43 25" fill="none" stroke="#fff" strokeWidth="2">
          <rect x="1" y="1" width="41" height="23" />
          <path d="M5.500 7.500h33" strokeDasharray="2.200 2.200" />
          <path d="M5.500 12.500h6M31.500 12.500h6M5.500 18h6M13.500 18h16M31.500 18h6" />
          <path d="M13.500 12.500h16" strokeDasharray="2.200 2.200" />
        </svg>
      </TrayItem>
      <button type="button" className="w-[62px] pt-[3px]">
        ESP
      </button>
      <button type="button" className="flex w-[142px] flex-col items-center justify-center leading-[34px]">
        <span>10:00</span>
        <span>24/02/2022</span>
      </button>
      <TrayItem label="Notifications" className="w-[74px]">
        <svg width="32" height="30" viewBox="0 0 32 30" fill="none" stroke="#fff" strokeWidth="2">
          <path d="M1 1h30v22H20.500L16 28l-4.500-5H1z" />
        </svg>
      </TrayItem>
      <button type="button" aria-label="Show desktop" className="ml-[15px] w-[9px] border-l border-[#7b8597]" />
    </div>
  )
}

export default function App() {
  return (
    <div className="relative flex h-screen flex-col overflow-hidden bg-white font-['Open_Sans','Noto_Sans',sans-serif]">
      <TitleBar />
      <TabBar />
      <Ribbon />
      <NavBar />
      <main className="flex min-h-0 flex-1">
        <div className="min-w-0 flex-1 overflow-hidden">
          <FileTable />
        </div>
        <ScrollBar />
      </main>
      <StatusBar />
      <Taskbar />
      <RenameDialog />
    </div>
  )
}
